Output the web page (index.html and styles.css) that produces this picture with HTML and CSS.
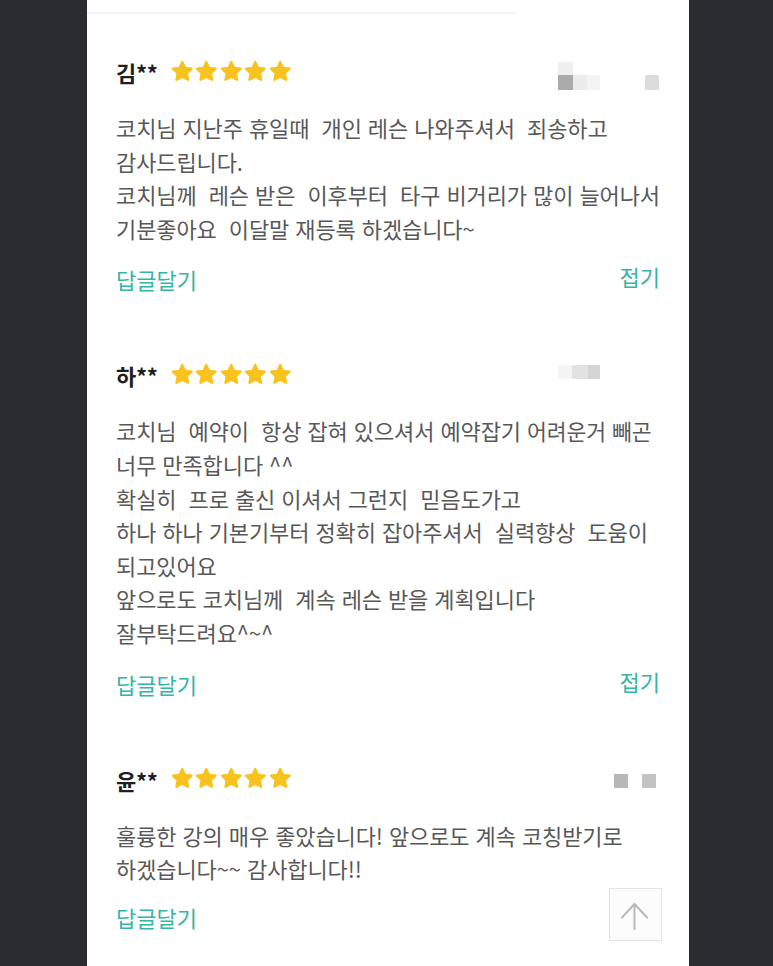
FILE: index.html
```html
<!DOCTYPE html>
<html lang="ko">
<head>
<meta charset="utf-8">
<title>리뷰</title>
<link rel="stylesheet" href="styles.css">
</head>
<body>
<div class="page">
  <main class="panel">
    <div class="divider"></div>
    <section class="reviews">
      <article class="review">
        <header class="review-head">
          <span class="name">김**</span>
          <span class="stars">
            <svg class="star" viewBox="0 0 24 24"><path d="M12 2.8l2.8 5.9 6.4.8-4.7 4.5 1.2 6.4L12 17.3l-5.7 3.1 1.2-6.4-4.7-4.5 6.4-.8z"/></svg>
            <svg class="star" viewBox="0 0 24 24"><path d="M12 2.8l2.8 5.9 6.4.8-4.7 4.5 1.2 6.4L12 17.3l-5.7 3.1 1.2-6.4-4.7-4.5 6.4-.8z"/></svg>
            <svg class="star" viewBox="0 0 24 24"><path d="M12 2.8l2.8 5.9 6.4.8-4.7 4.5 1.2 6.4L12 17.3l-5.7 3.1 1.2-6.4-4.7-4.5 6.4-.8z"/></svg>
            <svg class="star" viewBox="0 0 24 24"><path d="M12 2.8l2.8 5.9 6.4.8-4.7 4.5 1.2 6.4L12 17.3l-5.7 3.1 1.2-6.4-4.7-4.5 6.4-.8z"/></svg>
            <svg class="star" viewBox="0 0 24 24"><path d="M12 2.8l2.8 5.9 6.4.8-4.7 4.5 1.2 6.4L12 17.3l-5.7 3.1 1.2-6.4-4.7-4.5 6.4-.8z"/></svg>
          </span>
          <svg class="pix" viewBox="0 0 104 40" width="104" height="40">
            <rect x="2" y="10" width="15" height="13" fill="#efefef"/>
            <rect x="2" y="23" width="15" height="15" fill="#ababab"/>
            <rect x="17" y="23" width="14" height="15" fill="#ebebeb"/>
            <rect x="31" y="23" width="13" height="15" fill="#f3f3f3"/>
            <rect x="89" y="23" width="14" height="15" fill="#dcdcdc"/>
          </svg>
        </header>
        <p class="text">코치님 지난주 휴일때  개인 레슨 나와주셔서  죄송하고<br>감사드립니다.<br>코치님께  레슨 받은  이후부터  타구 비거리가 많이 늘어나서<br>기분좋아요  이달말 재등록 하겠습니다~</p>
        <div class="actions">
          <a class="reply">답글달기</a>
          <a class="fold">접기</a>
        </div>
      </article>

      <article class="review">
        <header class="review-head">
          <span class="name">하**</span>
          <span class="stars">
            <svg class="star" viewBox="0 0 24 24"><path d="M12 2.8l2.8 5.9 6.4.8-4.7 4.5 1.2 6.4L12 17.3l-5.7 3.1 1.2-6.4-4.7-4.5 6.4-.8z"/></svg>
            <svg class="star" viewBox="0 0 24 24"><path d="M12 2.8l2.8 5.9 6.4.8-4.7 4.5 1.2 6.4L12 17.3l-5.7 3.1 1.2-6.4-4.7-4.5 6.4-.8z"/></svg>
            <svg class="star" viewBox="0 0 24 24"><path d="M12 2.8l2.8 5.9 6.4.8-4.7 4.5 1.2 6.4L12 17.3l-5.7 3.1 1.2-6.4-4.7-4.5 6.4-.8z"/></svg>
            <svg class="star" viewBox="0 0 24 24"><path d="M12 2.8l2.8 5.9 6.4.8-4.7 4.5 1.2 6.4L12 17.3l-5.7 3.1 1.2-6.4-4.7-4.5 6.4-.8z"/></svg>
            <svg class="star" viewBox="0 0 24 24"><path d="M12 2.8l2.8 5.9 6.4.8-4.7 4.5 1.2 6.4L12 17.3l-5.7 3.1 1.2-6.4-4.7-4.5 6.4-.8z"/></svg>
          </span>
          <svg class="pix" viewBox="0 0 104 40" width="104" height="40">
            <rect x="2" y="10" width="14" height="14" fill="#f4f4f4"/>
            <rect x="16" y="10" width="16" height="14" fill="#e2e2e2"/>
            <rect x="32" y="10" width="12" height="14" fill="#d6d6d6"/>
          </svg>
        </header>
        <p class="text">코치님  예약이  항상 잡혀 있으셔서 예약잡기 <span class="squeeze">어려운거 빼곤</span><br>너무 만족합니다 ^^<br>확실히  프로 출신 이셔서 그런지  믿음도가고<br>하나 하나 기본기부터 정확히 잡아주셔서  실력향상  도움이<br>되고있어요<br>앞으로도 코치님께  계속 레슨 받을 계획입니다<br>잘부탁드려요^~^</p>
        <div class="actions">
          <a class="reply">답글달기</a>
          <a class="fold">접기</a>
        </div>
      </article>

      <article class="review">
        <header class="review-head">
          <span class="name">윤**</span>
          <span class="stars">
            <svg class="star" viewBox="0 0 24 24"><path d="M12 2.8l2.8 5.9 6.4.8-4.7 4.5 1.2 6.4L12 17.3l-5.7 3.1 1.2-6.4-4.7-4.5 6.4-.8z"/></svg>
            <svg class="star" viewBox="0 0 24 24"><path d="M12 2.8l2.8 5.9 6.4.8-4.7 4.5 1.2 6.4L12 17.3l-5.7 3.1 1.2-6.4-4.7-4.5 6.4-.8z"/></svg>
            <svg class="star" viewBox="0 0 24 24"><path d="M12 2.8l2.8 5.9 6.4.8-4.7 4.5 1.2 6.4L12 17.3l-5.7 3.1 1.2-6.4-4.7-4.5 6.4-.8z"/></svg>
            <svg class="star" viewBox="0 0 24 24"><path d="M12 2.8l2.8 5.9 6.4.8-4.7 4.5 1.2 6.4L12 17.3l-5.7 3.1 1.2-6.4-4.7-4.5 6.4-.8z"/></svg>
            <svg class="star" viewBox="0 0 24 24"><path d="M12 2.8l2.8 5.9 6.4.8-4.7 4.5 1.2 6.4L12 17.3l-5.7 3.1 1.2-6.4-4.7-4.5 6.4-.8z"/></svg>
          </span>
          <svg class="pix" viewBox="0 0 104 40" width="104" height="40">
            <rect x="58" y="14" width="14" height="14" fill="#b7b7b7"/>
            <rect x="86" y="14" width="14" height="14" fill="#c3c3c3"/>
          </svg>
        </header>
        <p class="text">훌륭한 강의 매우 좋았습니다! 앞으로도 계속 코칭받기로<br>하겠습니다~~ 감사합니다!!</p>
        <div class="actions last">
          <a class="reply">답글달기</a>
        </div>
      </article>
    </section>

    <button class="to-top" type="button" aria-label="맨 위로">
      <svg viewBox="0 0 52 52" width="52" height="52"><path d="M25.5 40V15M13 28.5L25.5 15 38 28.5"/></svg>
    </button>
  </main>
</div>
</body>
</html>
```

FILE: styles.css
```css
html, body {
  margin: 0;
  padding: 0;
  background: #2a2c31;
}

.page {
  width: 773px;
  height: 966px;
  overflow: hidden;
}

.panel {
  position: relative;
  margin-left: 87px;
  width: 602px;
  height: 966px;
  padding-top: 12px;
  background: #ffffff;
  box-sizing: border-box;
  font-family: "Noto Sans CJK KR", "Noto Sans", sans-serif;
}

.divider {
  width: 428px;
  height: 2px;
  background: #f3f3f3;
}

.reviews {
  padding: 38px 29px 0 29px;
  display: flex;
  flex-direction: column;
  gap: 59px;
}

.review-head {
  height: 40px;
  display: flex;
  align-items: center;
}

.name {
  font-size: 22px;
  font-weight: 700;
  color: #1f1f1f;
  line-height: 40px;
  letter-spacing: -0.3px;
}

.stars {
  display: flex;
  gap: 0;
  margin-left: 12px;
  margin-top: -2px;
}

.star {
  width: 24.5px;
  height: 24.5px;
}

.star path {
  fill: #f8c21f;
  stroke: #f8c21f;
  stroke-width: 2.2;
  stroke-linejoin: round;
}

.pix {
  margin-left: auto;
  display: block;
}

.text {
  margin: 19px 0 0 0;
  font-size: 22px;
  line-height: 33.6px;
  color: #585858;
  white-space: pre;
  letter-spacing: -0.1px;
}

.squeeze {
  display: inline-block;
  transform: scaleX(0.98);
  transform-origin: left center;
}

.actions {
  margin-top: 17px;
  display: flex;
  justify-content: space-between;
  align-items: center;
  height: 34px;
}

.actions.last {
  margin-top: 14px;
}

.reply,
.fold {
  font-size: 22px;
  color: #34b5a6;
  line-height: 34px;
}

.fold {
  margin-top: -6px;
}

.to-top {
  position: absolute;
  left: 522px;
  top: 888px;
  width: 53px;
  height: 53px;
  padding: 0;
  margin: 0;
  border: 1px solid #e4e4e4;
  background: #fcfcfc;
  box-sizing: border-box;
}

.to-top svg {
  display: block;
  margin: -1px;
}

.to-top path {
  fill: none;
  stroke: #b9b9b9;
  stroke-width: 2;
  stroke-linecap: round;
  stroke-linejoin: round;
}
```
